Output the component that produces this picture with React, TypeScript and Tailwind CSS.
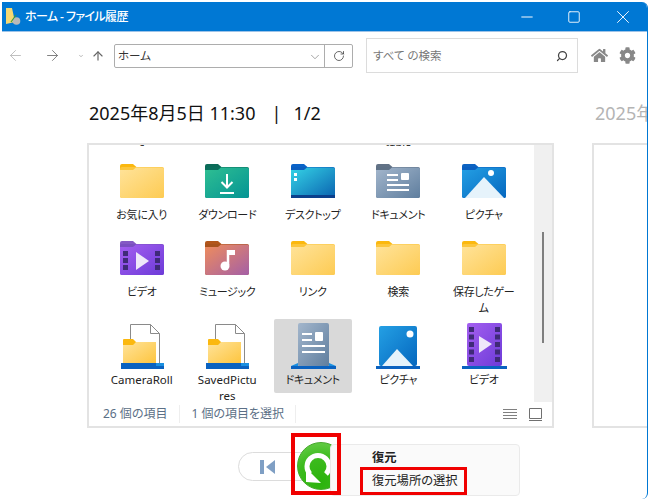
import { ChevronDown, Minus, RotateCw, Search, Square, X, ArrowLeft, ArrowRight, ArrowUp } from 'lucide-react'
import { FaCog, FaHome } from 'react-icons/fa'

const jp = "font-['Noto_Sans','Noto_Sans_CJK_JP',sans-serif] [font-feature-settings:'palt']"

type FolderProps = { back: string; tab: string; from: string; to: string; id: string; children?: React.ReactNode }

// Windows 11 style folder body with a small tab
function Folder({ back, tab, from, to, id, children }: FolderProps) {
  return (
    <svg width="46" height="36" viewBox="0 0 46 36" className="block shrink-0">
      <defs>
        <linearGradient id={id} x1="0" y1="0" x2="1" y2="1">
          <stop offset="0" stopColor={from} />
          <stop offset="1" stopColor={to} />
        </linearGradient>
      </defs>
      <path d="M1 3a2 2 0 0 1 2-2h11l4 3.500v3h-17z" fill={tab} />
      <rect x="1" y="4" width="44" height="31" rx="2" fill={back} />
      <path d="M1 7h13l3-2.500h26a2 2 0 0 1 2 2V33a2 2 0 0 1-2 2H3a2 2 0 0 1-2-2z" fill={`url(#${id})`} />
      {children}
    </svg>
  )
}

const YellowFolder = ({ id }: { id: string }) => <Folder id={id} back="#fcc63c" tab="#fbb80f" from="#ffe39a" to="#fdcb53" />

const DownloadFolder = () => (
  <Folder id="dl" back="#0a6e5b" tab="#0b6b58" from="#2fbf92" to="#049494">
    <path d="M23 11v13M17.500 19l5.500 5.500 5.500-5.500M16 30h14" fill="none" stroke="#fff" strokeWidth="2" />
  </Folder>
)

const DesktopFolder = () => (
  <Folder id="dt" back="#0b5fc0" tab="#0a63c8" from="#35d4e6" to="#0a62b0">
    <rect x="4" y="10" width="3" height="3" fill="#fff" />
    <rect x="4" y="15" width="3" height="3" fill="#fff" />
    <rect x="1" y="32" width="44" height="3" fill="#0b3f8c" />
  </Folder>
)

const DocFolder = () => (
  <Folder id="doc" back="#5f7186" tab="#627286" from="#a3b6cc" to="#5f7e9e">
    <path d="M12 11h11v2H12zM12 16h11v2H12zM12 21h22v2H12zM12 26h22v2H12z" fill="#fff" />
    <rect x="26" y="10" width="8" height="7" rx="1" fill="#fff" />
  </Folder>
)

const PictureFolder = () => (
  <Folder id="pic" back="#0a5fc0" tab="#0d63c2" from="#24a0e4" to="#0567bf">
    <circle cx="30" cy="10" r="3" fill="#fff" />
    <path d="M4 35L23 14l20 21z" fill="#e6f3fb" />
  </Folder>
)

const Reel = ({ x, n, y0, step }: { x: number; n: number; y0: number; step: number }) => (
  <>
    {Array.from({ length: n }).map((_, i) => (
      <rect key={i} x={x} y={y0 + i * step} width="5" height="5" fill="#3f2a78" />
    ))}
  </>
)

const VideoFolder = () => (
  <Folder id="vid" back="#7a4fc0" tab="#8459c4" from="#a45ff0" to="#6d3bd8">
    <Reel x={4} n={3} y0={11} step={7} />
    <Reel x={36} n={3} y0={11} step={7} />
    <path d="M17 12l13 9-13 9z" fill="#eee8fa" />
  </Folder>
)

const MusicFolder = () => (
  <Folder id="mus" back="#a8531c" tab="#b2561a" from="#ef8d5c" to="#a45fa6">
    <path d="M24 10v15" stroke="#fff" strokeWidth="2.500" />
    <circle cx="21" cy="26" r="4.500" fill="#fff" />
    <path d="M24 10h7v5h-7z" fill="#fff" />
  </Folder>
)

const CameraRollIcon = ({ id }: { id: string }) => (
  <svg width="46" height="46" viewBox="0 0 46 46" className="block shrink-0">
    <path d="M11.500 1.500h20l9 9v32h-29z" fill="#fff" stroke="#8a8a8a" strokeWidth="1" />
    <path d="M31.500 1.500v9h9" fill="none" stroke="#8a8a8a" strokeWidth="1" />
    <defs>
      <linearGradient id={id} x1="0" y1="0" x2="1" y2="1">
        <stop offset="0" stopColor="#ffe39a" />
        <stop offset="1" stopColor="#fdc53f" />
      </linearGradient>
    </defs>
    <path d="M4 17a1 1 0 0 1 1-1h9l3 3v3H4z" fill="#fbb80f" />
    <path d="M4 22h10l3-3h20v21H4z" fill={`url(#${id})`} />
    <path d="M2 40h43v6H2z" fill="#0a62c0" />
    <path d="M37 40h8v3H37z" fill="#1a8fe0" />
  </svg>
)

const DocDoorIcon = () => (
  <svg width="46" height="46" viewBox="0 0 46 46" className="block shrink-0">
    <defs>
      <linearGradient id="dd" x1="0" y1="0" x2="1" y2="1">
        <stop offset="0" stopColor="#a3b6cc" />
        <stop offset="1" stopColor="#5f7e9e" />
      </linearGradient>
    </defs>
    <rect x="8" y="0" width="31" height="44" rx="2" fill="url(#dd)" />
    <path d="M12 10h10v2H12zM12 16h10v2H12zM12 22h23v2H12zM12 28h23v2H12z" fill="#fff" />
    <rect x="25" y="9" width="8" height="9" rx="1" fill="#fff" />
    <path d="M1 43h45v3H1z" fill="#0a62c0" />
    <path d="M39 40l7 3h-7z" fill="#1a8fe0" />
    <path d="M8 40l-7 3h7z" fill="#1a8fe0" />
  </svg>
)

const PictureDoorIcon = () => (
  <svg width="46" height="46" viewBox="0 0 46 46" className="block shrink-0">
    <defs>
      <linearGradient id="pd" x1="0" y1="0" x2="1" y2="1">
        <stop offset="0" stopColor="#24a0e4" />
        <stop offset="1" stopColor="#0567bf" />
      </linearGradient>
    </defs>
    <rect x="4" y="3" width="38" height="40" rx="2" fill="url(#pd)" />
    <circle cx="35" cy="11" r="3.500" fill="#fff" />
    <path d="M7 43l15-17 16 17z" fill="#e6f3fb" />
    <path d="M1 43h44v3H1z" fill="#0a62c0" />
  </svg>
)

const VideoDoorIcon = () => (
  <svg width="46" height="46" viewBox="0 0 46 46" className="block shrink-0">
    <defs>
      <linearGradient id="vd" x1="0" y1="0" x2="1" y2="1">
        <stop offset="0" stopColor="#a45ff0" />
        <stop offset="1" stopColor="#6d3bd8" />
      </linearGradient>
    </defs>
    <rect x="6" y="0" width="35" height="43" rx="2" fill="url(#vd)" />
    <Reel x={8} n={5} y0={4} step={7.500} />
    <Reel x={34} n={5} y0={4} step={7.500} />
    <path d="M18 13l13 8-13 9z" fill="#eee8fa" />
    <path d="M1 43h45v3H1z" fill="#0a62c0" />
  </svg>
)

function Item({ icon, label, selected, h, pad, latin }: { icon: React.ReactNode; label: string; selected?: boolean; h: string; pad?: boolean; latin?: boolean }) {
  return (
    <div className={`flex flex-col items-center ${h}`}>
      <div className={`flex flex-col items-center w-[78px] rounded-[2px] ${pad ? 'pt-[4px] h-[74px]' : ''} ${selected ? 'bg-[#d9d9d9]' : ''}`}>
        {icon}
        <div className={`${pad ? 'mt-[3px]' : 'mt-[8px]'} ${latin ? 'text-[11.500px] w-[63.500px]' : 'text-[11px] tracking-[-0.3px] w-[62px]'} shrink-0 leading-[16px] text-center text-[#222] break-all`}>{label}</div>
      </div>
    </div>
  )
}

export default function App() {
  return (
    <div className={`w-[650px] h-[501px] bg-white overflow-hidden pt-[2px] pl-[2px] ${jp}`}>
      <div className="w-[646px] h-[497px] border-r-[1.500px] border-[#0078d4] rounded-tr-[6px] rounded-br-[6px] overflow-hidden">
        {/* title bar */}
        <div className="h-[30px] bg-[#0078d4] border-b border-[#9dc3e8] flex items-center text-white">
          <svg width="20" height="18" viewBox="0 0 20 18" className="ml-[2px]">
            <path d="M2 0h6l3 14-9 2z" fill="#f5d973" />
            <circle cx="12.500" cy="13" r="3.800" fill="#b9b9b9" />
            <path d="M7 14l5-7" stroke="#3d9a3d" strokeWidth="1.200" fill="none" />
          </svg>
          <span className="ml-[1px] text-[12px] tracking-[-0.6px] font-medium">ホーム - ファイル履歴</span>
          <div className="ml-auto flex items-center">
            <Minus size={18} strokeWidth={1.300} className="mr-[31px]" />
            <Square size={14} strokeWidth={1.500} className="mr-[31px]" />
            <X size={22} strokeWidth={1} className="mr-[13px]" />
          </div>
        </div>

        {/* toolbar */}
        <div className="h-[41px] flex items-start pt-[6px] text-[#8a8a8a]">
          <div className="flex items-center h-[35px]">
            <ArrowLeft size={17} strokeWidth={1.200} className="ml-[5px] text-[#b5b5b5]" />
            <ArrowRight size={17} strokeWidth={1.300} className="ml-[20px] text-[#777]" />
            <ChevronDown size={6} className="ml-[17px] text-[#777]" />
            <ArrowUp size={14} strokeWidth={2} className="ml-[7px] text-[#666]" />
          </div>
          <div className="ml-[9px] mt-[6px] h-[24px] w-[239px] flex border border-[#adadad] rounded-[2px] bg-white">
            <span className="pl-[3px] text-[11.500px] leading-[22px] text-[#333] flex-1">ホーム</span>
            <ChevronDown size={14} strokeWidth={1} className="mt-[5px] mr-[2px] text-[#666]" />
            <div className="w-[28px] border-l border-[#adadad] flex items-center justify-center">
              <RotateCw size={12} strokeWidth={1.600} className="text-[#444]" />
            </div>
          </div>
          <div className="ml-[13px] h-[35px] w-[212px] border border-[#dcdcdc] flex items-center">
            <span className="pl-[6px] text-[11.500px] text-[#777] flex-1">すべて の検索</span>
            <Search size={12} strokeWidth={2.500} className="mr-[9px] text-[#444] -scale-x-100" />
          </div>
          <div className="flex items-center h-[35px]">
            <FaHome size={17} className="ml-[13px] text-[#888]" />
            <FaCog size={17} className="ml-[11px] text-[#888]" />
          </div>
        </div>

        {/* dates */}
        <div className="h-[70px] pl-[87px] pt-[28px] flex text-[18px] leading-[24px] text-[#111] overflow-hidden">
          <div className="w-[506px] shrink-0 flex whitespace-pre">
            <span>2025年8月5日 11:30</span>
            <span className="ml-[16px]">|</span>
            <span className="ml-[12px]">1/2</span>
          </div>
          <span className="text-[#b4b4b4] whitespace-nowrap">2025年</span>
        </div>

        {/* panels */}
        <div className="pl-[85px] flex">
          <div className="w-[467px] h-[285px] border-2 border-[#e3e3e3] flex flex-col">
            <div className="flex h-[257px]">
              <div className="flex-1 overflow-hidden">
                <div className="-mt-[11px] pl-[10px] grid grid-cols-5 w-[437.500px] text-[#222] text-[11px] leading-[16px] text-center">
                  <div className="h-[29px]">c</div>
                  <div className="h-[29px]" />
                  <div className="h-[29px]" />
                  <div className="h-[29px]">table</div>
                  <div className="h-[29px]" />
                </div>
                <div className="pl-[10px] grid grid-cols-5 w-[437.500px]">
                  <Item icon={<YellowFolder id="y1" />} label="お気に入り" h="h-[77px]" />
                  <Item icon={<DownloadFolder />} label="ダウンロード" h="h-[77px]" />
                  <Item icon={<DesktopFolder />} label="デスクトップ" h="h-[77px]" />
                  <Item icon={<DocFolder />} label="ドキュメント" h="h-[77px]" />
                  <Item icon={<PictureFolder />} label="ピクチャ" h="h-[77px]" />
                  <Item icon={<VideoFolder />} label="ビデオ" h="h-[79px]" />
                  <Item icon={<MusicFolder />} label="ミュージック" h="h-[79px]" />
                  <Item icon={<YellowFolder id="y2" />} label="リンク" h="h-[79px]" />
                  <Item icon={<YellowFolder id="y3" />} label="検索" h="h-[79px]" />
                  <Item icon={<YellowFolder id="y4" />} label="保存したゲーム" h="h-[79px]" />
                  <Item icon={<CameraRollIcon id="c1" />} label="CameraRoll" h="h-[83px]" pad latin />
                  <Item icon={<CameraRollIcon id="c2" />} label="SavedPictures" h="h-[83px]" pad latin />
                  <Item icon={<DocDoorIcon />} label="ドキュメント" h="h-[83px]" pad selected />
                  <Item icon={<PictureDoorIcon />} label="ピクチャ" h="h-[83px]" pad />
                  <Item icon={<VideoDoorIcon />} label="ビデオ" h="h-[83px]" pad />
                </div>
              </div>
              <div className="w-[18px] bg-[#f0f0f0] pt-[87px] flex justify-center">
                <div className="w-[2px] h-[111px] bg-[#7f7f7f]" />
              </div>
            </div>
            <div className="flex-1 flex items-center pl-[14px] text-[12px] text-[#5b6f86]">
              <span className="pr-[12px] border-r border-[#eee]">26 個の項目</span>
              <span className="pl-[11px] pr-[11px] border-r border-[#eee]">1 個の項目を選択</span>
              <div className="ml-auto flex items-center gap-[12px] pr-[10px] text-[#777]">
                <svg width="14" height="12" viewBox="0 0 14 12" stroke="#808080">
                  <path d="M0 1.500h14M0 4.500h14M0 7.500h14M0 10.500h14" />
                </svg>
                <svg width="13" height="13" viewBox="0 0 13 13" fill="none" stroke="#707070">
                  <path d="M.500.500h12v10H.500zM0 12.500h13" />
                </svg>
              </div>
            </div>
          </div>
          <div className="ml-[38px] flex-1 h-[285px] border-2 border-r-0 border-[#e3e3e3]" />
        </div>

        {/* bottom controls */}
        <div className="relative pl-[236px] pt-[24px]">
          <div className="w-[70px] h-[29px] border border-[#dcdcdc] rounded-l-full flex items-center pl-[21px]">
            <svg width="16" height="14" viewBox="0 0 16 14" fill="#7f9fc4">
              <rect x="0" y="0" width="4" height="14" />
              <path d="M15 0v14L6 7z" />
            </svg>
          </div>
          <div className="absolute left-[295px] top-[14px] w-[48px] h-[48px] rounded-full border border-[#46a82c] bg-[radial-gradient(circle_at_50%_85%,#2bb30c,#3dbb1e_55%,#6fd153)]">
            <svg width="46" height="46" viewBox="0 0 46 46" fill="none" stroke="#fff" strokeWidth="5">
              <path d="M28 31A11 11 0 1 0 12 31" />
              <path d="M8 25l15 15-15-1z" fill="#fff" stroke="none" />
            </svg>
          </div>
          <div className="absolute left-[328px] top-[16px] w-[190px] h-[52px] bg-[#fafafa] border border-[#eaeaea] rounded-[4px] text-[12.300px] text-[#222] pl-[41px] pt-[4px]">
            <div className="font-bold leading-[18px]">復元</div>
            <div className="mt-[5px] leading-[18px]">復元場所の選択</div>
          </div>
          <div className="absolute left-[289px] top-[5px] w-[50px] h-[62px] border-[4px] border-[#f00000]" />
          <div className="absolute left-[358px] top-[39px] w-[107px] h-[28px] border-[3px] border-[#f00000]" />
        </div>
      </div>
    </div>
  )
}
